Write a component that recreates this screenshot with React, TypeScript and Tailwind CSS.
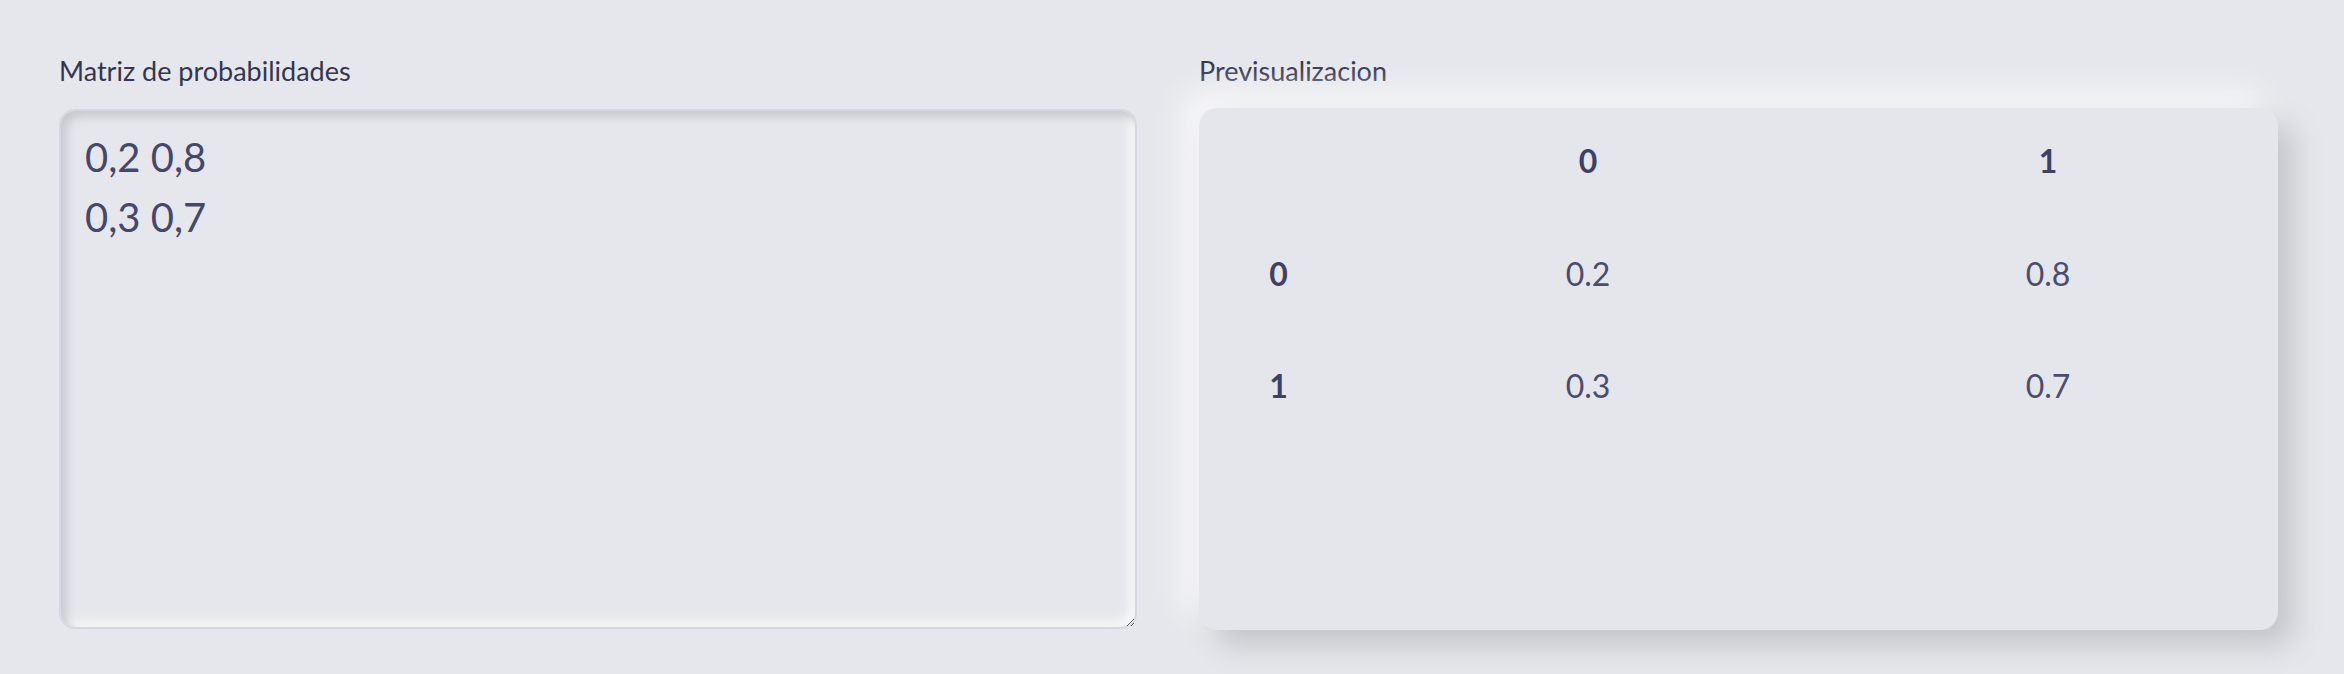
import React from 'react';

const matrix = [
  [0.2, 0.8],
  [0.3, 0.7],
];

export default function App() {
  return (
    <div className="min-h-[674px] bg-[#e6e7ec] px-[59px] pt-[53px] font-['Lato',sans-serif]">
      <div className="grid grid-cols-[1078px_1079px] gap-[62px]">
        {/* Input */}
        <div className="flex flex-col">
          <label className="mb-[20px] text-[27px] leading-[36px] text-[#34364f]">Matriz de probabilidades</label>
          <textarea
            defaultValue={'0,2 0,8\n0,3 0,7'}
            className="h-[520px] w-full rounded-[16px] border-2 border-[#d3d8e3] bg-[#e6e7ec] px-[24px] py-[16px] text-[40px] leading-[60px] text-[#45486b] shadow-[inset_6px_6px_10px_#c9cad0,inset_-6px_-6px_10px_#f7f7f9] outline-none font-['Lato',sans-serif]"
          />
        </div>

        {/* Preview */}
        <div className="flex flex-col">
          <label className="mb-[19px] text-[27px] leading-[36px] text-[#34364f]">Previsualizacion</label>
          <div className="h-[522px] rounded-[18px] bg-[#e5e6eb] shadow-[16px_16px_30px_#c4c5ca,-16px_-16px_30px_#f8f8fa]">
            <div className="grid h-[110px] grid-cols-[159px_1fr_1fr] items-center pb-[4px] text-[32px] font-bold text-[#3e4163]">
              <span />
              <span className="text-center">0</span>
              <span className="text-center">1</span>
            </div>
            {matrix.map((row, i) => (
              <div key={i} className="grid h-[112px] grid-cols-[159px_1fr_1fr] items-center text-[32px] text-[#4a4c70]">
                <span className="text-center font-bold text-[#3e4163]">{i}</span>
                {row.map((v, j) => (
                  <span key={j} className="text-center">{v}</span>
                ))}
              </div>
            ))}
          </div>
        </div>
      </div>
    </div>
  );
}
